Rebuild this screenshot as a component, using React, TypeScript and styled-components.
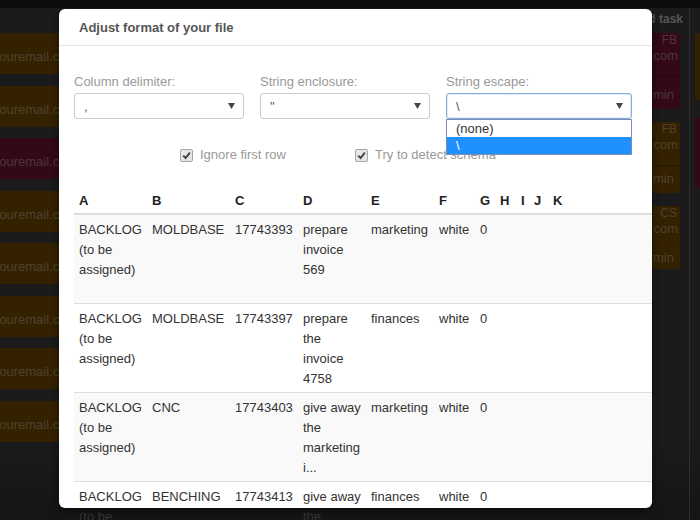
import React from "react";
import styled, { createGlobalStyle, css } from "styled-components";

const GlobalStyle = createGlobalStyle`
  html, body { margin: 0; padding: 0; }
  body {
    font-family: "Liberation Sans", Arial, sans-serif;
    font-size: 13px;
    background: #1b1b1b;
    overflow: hidden;
  }
  #root { width: 700px; height: 520px; position: relative; overflow: hidden; }
  * { box-sizing: border-box; }
`;

/* ---------- background board ---------- */

type Tone = "orange" | "magenta";

const toneColor = (t: Tone) => (t === "orange" ? "#664300" : "#66132f");

const Board = styled.div`
  display: flex;
  flex-direction: column;
  width: 700px;
  height: 520px;
  background: linear-gradient(#363636 0, #363636 440px, #2a2a2a 520px);
`;

const TopBar = styled.div`
  height: 8px;
  flex: none;
  background: #1a1a1a;
`;

const Lanes = styled.div`
  display: flex;
  align-items: flex-start;
  margin-left: -61px;
`;

const Lane = styled.div<{ $w: number; $after?: number; $divider?: boolean }>`
  flex: none;
  width: ${(p) => p.$w}px;
  margin-right: ${(p) => p.$after ?? 0}px;
  display: flex;
  flex-direction: column;
  ${(p) =>
    p.$divider &&
    css`
      border-left: 1px solid #5a5a5a;
      padding-left: 5px;
      min-height: 512px;
    `}
`;

const LaneHeader = styled.div`
  height: 25px;
  line-height: 22px;
  margin-right: -3px;
  text-align: right;
  font-weight: bold;
  font-size: 12px;
  color: #a8a8a8;
  white-space: nowrap;
`;

const CardList = styled.div<{ $gap: number }>`
  display: flex;
  flex-direction: column;
  gap: ${(p) => p.$gap}px;
`;

const Card = styled.div<{ $tone: Tone; $h: number }>`
  height: ${(p) => p.$h}px;
  background: ${(p) => toneColor(p.$tone)};
  border-radius: 3px;
  color: rgba(255, 255, 255, 0.36);
  font-size: 13px;
  overflow: hidden;
  display: flex;
  flex-direction: column;
`;

const EmailLine = styled.div<{ $align?: "left" | "right" }>`
  line-height: 18px;
  white-space: nowrap;
  text-align: ${(p) => p.$align ?? "left"};
  padding: ${(p) => (p.$align === "right" ? "0 2px 0 0" : "15px 0 0 8px")};
`;

const Tag = styled.div`
  height: 14px;
  line-height: 14px;
  text-align: right;
  padding-right: 3px;
  font-size: 12px;
`;

const CardDivider = styled.div`
  height: 1px;
  margin-top: 11px;
  background: rgba(0, 0, 0, 0.28);
`;

const TimeLine = styled.div`
  line-height: 18px;
  margin-top: auto;
  padding: 0 6px 5px 0;
  text-align: right;
`;

/* ---------- modal ---------- */

const Backdrop = styled.div`
  position: absolute;
  inset: 0;
  background: rgba(0, 0, 0, 0.5);
  z-index: 1;
`;

const Modal = styled.div`
  position: absolute;
  left: 59px;
  top: 9px;
  width: 593px;
  height: 499px;
  background: #fff;
  border-radius: 6px;
  box-shadow: 0 3px 9px rgba(0, 0, 0, 0.5);
  z-index: 2;
  display: flex;
  flex-direction: column;
`;

const Header = styled.div`
  height: 37px;
  flex: none;
  padding: 0 20px;
  display: flex;
  align-items: center;
  border-bottom: 1px solid #e5e5e5;
`;

const Title = styled.h4`
  margin: 0;
  font-size: 13px;
  font-weight: bold;
  color: #555;
`;

const Body = styled.div`
  padding: 26px 0 0 15px;
`;

const FieldRow = styled.div`
  display: flex;
  gap: 16px;
`;

const Field = styled.div<{ $w: number }>`
  position: relative;
  width: ${(p) => p.$w}px;
`;

const Label = styled.label`
  display: block;
  line-height: 20px;
  margin-bottom: 1px;
  color: #999;
`;

const SelectBox = styled.div<{ $focused?: boolean }>`
  height: 26px;
  border: 1px solid ${(p) => (p.$focused ? "#86acdf" : "#ccc")};
  border-radius: 3px;
  padding: 0 8px 0 9px;
  display: flex;
  align-items: center;
  justify-content: space-between;
  color: #555;
  background: #fff;
  ${(p) => p.$focused && css`box-shadow: inset 0 0 0 1px rgba(134, 172, 223, 0.25);`}
`;

const Dropdown = styled.ul`
  position: absolute;
  top: 100%;
  left: 0;
  right: 0;
  margin: 0;
  padding: 0;
  list-style: none;
  border: 1px solid #7d8fb0;
  background: #fff;
  z-index: 3;
`;

const Option = styled.li<{ $selected?: boolean }>`
  height: 17px;
  line-height: 17px;
  padding: 0 9px;
  color: ${(p) => (p.$selected ? "#fff" : "#333")};
  background: ${(p) => (p.$selected ? "#1e90ff" : "transparent")};
`;

const CheckRow = styled.div`
  display: flex;
  gap: 69px;
  margin-top: 25px;
  padding-left: 106px;
  line-height: 20px;
`;

const CheckItem = styled.label`
  display: flex;
  align-items: center;
  gap: 7px;
  color: #999;
  white-space: nowrap;
  padding-top: 1px;
`;

const CheckBox = styled.span`
  width: 13px;
  height: 13px;
  flex: none;
  border: 1px solid #a6a6a6;
  border-radius: 2px;
  background: #e6e6e6;
  display: flex;
  align-items: center;
  justify-content: center;
`;

const Table = styled.table`
  margin-top: 21px;
  width: 100%;
  table-layout: fixed;
  border-collapse: collapse;
  color: #333;
`;

const Th = styled.th`
  text-align: left;
  font-weight: bold;
  line-height: 20px;
  padding: 5px 4px 2px 5px;
  border-bottom: 2px solid #ddd;
  color: #222;
`;

const Tr = styled.tr<{ $striped?: boolean }>`
  background: ${(p) => (p.$striped ? "#f9f9f9" : "transparent")};
`;

const Td = styled.td`
  vertical-align: top;
  padding: 5px 4px 3px 5px;
  border-top: 1px solid #ddd;
  line-height: 20px;
`;

const CellText = styled.div`
  height: 80px;
  overflow: hidden;
  white-space: pre;
`;

const Arrow = () => (
  <svg width="7" height="6" viewBox="0 0 7 6" aria-hidden>
    <path d="M0 0h7L3.5 6z" fill="#444" />
  </svg>
);

const Check = () => (
  <svg width="9" height="9" viewBox="0 0 9 9" aria-hidden>
    <path d="M1.2 4.6 L3.6 7 L7.9 1.6" fill="none" stroke="#444" strokeWidth="2" />
  </svg>
);

const colWidths = [73, 83, 68, 68, 68, 41, 20, 21, 13, 19];
const headers = ["A", "B", "C", "D", "E", "F", "G", "H", "I", "J", "K"];

const rows: string[][] = [
  ["BACKLOG\n(to be\nassigned)", "MOLDBASE", "17743393", "prepare\ninvoice\n569", "marketing", "white", "0"],
  ["BACKLOG\n(to be\nassigned)", "MOLDBASE", "17743397", "prepare\nthe\ninvoice\n4758", "finances", "white", "0"],
  ["BACKLOG\n(to be\nassigned)", "CNC", "17743403", "give away\nthe\nmarketing\ni...", "marketing", "white", "0"],
  ["BACKLOG\n(to be\nassigned)", "BENCHING", "17743413", "give away\nthe\nmarketing\ni...", "finances", "white", "0"],
];

const leftCards: Tone[] = ["orange", "orange", "magenta", "orange", "orange", "orange", "orange", "orange"];

const rightCards: { tone: Tone; h: number; tag: string; email: string; time: string }[] = [
  { tone: "magenta", h: 76, tag: "FB", email: "info@youremail.com", time: "15 min" },
  { tone: "orange", h: 71, tag: "FB", email: "info@youremail.com", time: "30 min" },
  { tone: "orange", h: 63, tag: "CS", email: "info@youremail.com", time: "45 min" },
];

export default function App() {
  return (
    <>
      <GlobalStyle />
      <Board>
        <TopBar />
        <Lanes>
          <Lane $w={211} $after={10}>
            <LaneHeader />
            <CardList $gap={11.5}>
              {leftCards.map((t, i) => (
                <Card key={i} $tone={t} $h={41}>
                  <EmailLine>name@youremail.com</EmailLine>
                </Card>
              ))}
            </CardList>
          </Lane>
          <Lane $w={160} $after={10}>
            <LaneHeader>In progress</LaneHeader>
          </Lane>
          <Lane $w={170} $after={10}>
            <LaneHeader>Review</LaneHeader>
          </Lane>
          <Lane $w={170} $after={9}>
            <LaneHeader>Add task</LaneHeader>
            <CardList $gap={13}>
              {rightCards.map((c, i) => (
                <Card key={i} $tone={c.tone} $h={c.h}>
                  <Tag>{c.tag}</Tag>
                  <EmailLine $align="right">{c.email}</EmailLine>
                  <CardDivider />
                  <TimeLine>{c.time}</TimeLine>
                </Card>
              ))}
            </CardList>
          </Lane>
          <Lane $w={180} $divider>
            <LaneHeader />
            <CardList $gap={17}>
              <Card $tone="orange" $h={67} />
              <Card $tone="magenta" $h={71} />
            </CardList>
          </Lane>
        </Lanes>
      </Board>

      <Backdrop />

      <Modal>
        <Header>
          <Title>Adjust format of your file</Title>
        </Header>
        <Body>
          <FieldRow>
            <Field $w={170}>
              <Label>Column delimiter:</Label>
              <SelectBox>
                <span>,</span>
                <Arrow />
              </SelectBox>
            </Field>
            <Field $w={170}>
              <Label>String enclosure:</Label>
              <SelectBox>
                <span>"</span>
                <Arrow />
              </SelectBox>
            </Field>
            <Field $w={186}>
              <Label>String escape:</Label>
              <SelectBox $focused>
                <span>\</span>
                <Arrow />
              </SelectBox>
              <Dropdown>
                <Option>(none)</Option>
                <Option $selected>\</Option>
              </Dropdown>
            </Field>
          </FieldRow>

          <CheckRow>
            <CheckItem>
              <CheckBox>
                <Check />
              </CheckBox>
              Ignore first row
            </CheckItem>
            <CheckItem>
              <CheckBox>
                <Check />
              </CheckBox>
              Try to detect schema
            </CheckItem>
          </CheckRow>

          <Table>
            <colgroup>
              {colWidths.map((w, i) => (
                <col key={i} style={{ width: w }} />
              ))}
              <col />
            </colgroup>
            <thead>
              <tr>
                {headers.map((h) => (
                  <Th key={h}>{h}</Th>
                ))}
              </tr>
            </thead>
            <tbody>
              {rows.map((r, i) => (
                <Tr key={i} $striped={i % 2 === 0}>
                  {headers.map((_, j) => (
                    <Td key={j}>
                      <CellText>{r[j] ?? ""}</CellText>
                    </Td>
                  ))}
                </Tr>
              ))}
            </tbody>
          </Table>
        </Body>
      </Modal>
    </>
  );
}
